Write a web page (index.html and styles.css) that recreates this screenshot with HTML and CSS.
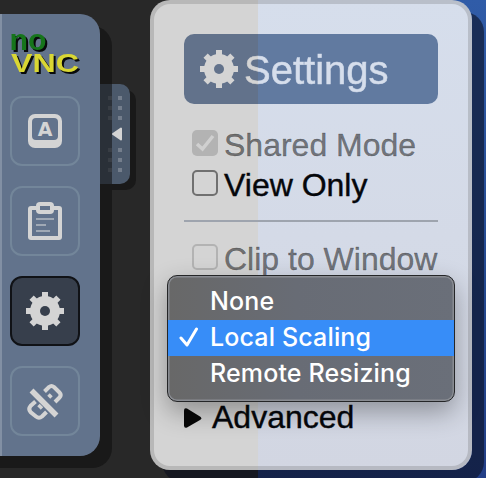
FILE: index.html
```html
<!DOCTYPE html>
<html lang="en">
<head>
<meta charset="utf-8">
<title>noVNC</title>
<link rel="stylesheet" href="styles.css">
</head>
<body>
<main class="screen">
  <nav class="bar">
    <svg class="logo" width="72" height="44" viewBox="0 0 72 44">
      <text class="no" x="-.5" y="17.500" textLength="37" lengthAdjust="spacingAndGlyphs">no</text>
      <text class="vnc" x="1" y="39.500" textLength="68" lengthAdjust="spacingAndGlyphs">VNC</text>
    </svg>
    <button class="tool"><svg width="50" height="50" viewBox="0 0 50 50">
      <rect class="fill" x="8" y="8" width="34" height="34" rx="7"/><rect class="hole" x="12" y="12" width="26" height="22" rx="4"/>
      <text class="key" x="25" y="30" text-anchor="middle">A</text></svg></button>
    <button class="tool"><svg width="50" height="50" viewBox="0 0 50 50">
      <rect class="fill" x="8" y="10" width="34" height="34" rx="3"/><rect class="hole" x="12" y="14" width="26" height="26"/>
      <rect class="fill" x="16" y="6" width="18" height="12" rx="4"/><rect class="hole" x="20" y="10" width="10" height="4"/>
      <path class="lines" d="M16 23h18M16 29h10M16 35h14"/></svg></button>
    <button class="tool active"><svg width="50" height="50" viewBox="0 0 50 50">
      <path class="teeth" d="M25 6v38M6 25h38M11.600 11.600l26.800 26.800M38.400 11.600l-26.800 26.800"/><circle class="fill" cx="25" cy="25" r="15"/><circle class="gear-hole" cx="25" cy="25" r="5"/></svg></button>
    <button class="tool"><svg width="50" height="50" viewBox="0 0 50 50">
      <path class="link" d="M24.500 15.500L29 11q2.500-2 5 0L39.500 16.500q2.500 2.500 0 5L35 26M15.500 25.500L10.500 30q-2.500 3 0 6L16 40.500q3 2.500 6 0L26.500 36"/>
      <path class="link cut" d="M11.500 14.500l25 25"/><path class="link dot" d="M28.500 18.500l3 3M18.500 29l3.500 3.500"/></svg></button>
  </nav>
  <div class="handle">
    <svg width="30" height="100" viewBox="0 0 30 100">
      <path class="dots" d="M8 14h4M18 14h4M8 24h4M18 24h4M8 34h4M18 34h4M8 66h4M18 66h4M8 76h4M18 76h4M8 86h4M18 86h4"/>
      <path class="hshade" d="M0 0h12v100H0z"/>
      <path class="arrow" d="M13 50 L21 44.500V55.500Z"/>
    </svg>
  </div>
  <section class="panel">
    <h1 class="title"><svg width="40" height="40" viewBox="5 5 40 40">
      <path class="teeth" d="M25 6v38M6 25h38M11.600 11.600l26.800 26.800M38.400 11.600l-26.800 26.800"/><circle class="fill" cx="25" cy="25" r="15"/><circle class="title-hole" cx="25" cy="25" r="5"/></svg><span>Settings</span></h1>
    <div class="row off"><i class="check"><svg width="26" height="26" viewBox="0 0 26 26"><path d="M5 14l5.500 5L21 6"/></svg></i><span>Shared Mode</span></div>
    <div class="row"><i class="check"></i><span>View Only</span></div>
    <hr>
    <div class="row off"><i class="check blank"></i><span>Clip to Window</span></div>
    <div class="row advanced"><svg width="20" height="24" viewBox="0 0 20 24"><path d="M2 4.500V19.500Q2 22.500 5 21.500L18 14Q20.500 12.200 18 10.500L5 2.500Q2 1.500 2 4.500Z"/></svg><span>Advanced</span></div>
  </section>
  <div class="menu">
    <div class="item"><span>None</span></div>
    <div class="item chosen"><svg width="20" height="22" viewBox="0 0 20 22"><path d="M2 12l6 7L17.500 3"/></svg><span>Local Scaling</span></div>
    <div class="item"><span>Remote Resizing</span></div>
  </div>
</main>
</body>
</html>
```
FILE: styles.css
```css
* { box-sizing: border-box; }
body { margin: 0; }
.screen {
  position: relative;
  display: flex;
  width: 486px;
  height: 478px;
  overflow: hidden;
  font-family: "Liberation Sans", Arial, sans-serif;
  background: linear-gradient(#282828, #282828) 0 0 / 258px 100% no-repeat,
    linear-gradient(#305ca8, #23488f 60%, #233f87);
}
.bar {
  width: 100px;
  height: 442px;
  margin-top: 14px;
  padding: 18px 0 0 10px;
  display: flex;
  flex-direction: column;
  flex: none;
  gap: 20px;
  border-radius: 0 20px 20px 0;
  background: linear-gradient(90deg, #8290a4 2px, #62738c 2px);
  box-shadow: 12px 12px 0 #191919, 0 12px 0 #191919;
}
.logo { display: block; flex: none; overflow: visible; filter: drop-shadow(2px 2px 0 #080a0b); }
.logo text { font-family: "Liberation Sans", sans-serif; font-weight: bold; }
.no { font-size: 29px; fill: #16751b; }
.vnc { font-size: 26px; fill: #d9d733; }
.tool {
  width: 70px;
  height: 70px;
  flex: none;
  display: grid;
  place-items: center;
  padding: 0;
  border: 2px solid #73869a;
  border-radius: 12px;
  background: transparent;
}
.tool svg { display: block; }
.tool.active { background: #373f4c; border-color: #101216; }
.fill { fill: #d4d4d4; }
.hole { fill: #62738c; }
.gear-hole { fill: #373f4c; }
.key { font: bold 19px "DejaVu Sans", sans-serif; fill: #d4d4d4; }
.lines { stroke: #a0a9b5; stroke-width: 2; }
.teeth { stroke: #d4d4d4; stroke-width: 6; }
.link { fill: none; stroke: #d4d4d4; stroke-width: 4; }
.cut { stroke-width: 5.500px; }
.dot { stroke-width: 3.500px; }
.handle {
  position: absolute;
  left: 100px;
  top: 84px;
  width: 30px;
  height: 100px;
  border-radius: 0 10px 10px 0;
  background: #4b596b;
  box-shadow: 6px 6px 0 #191919;
}
.handle svg { display: block; }
.dots { stroke: #747e8c; stroke-width: 4; }
.hshade { fill: rgba(26, 28, 30, .66); }
.arrow { fill: #d4d4d4; stroke: #d4d4d4; stroke-width: 2; stroke-linejoin: round; }
.panel {
  width: 322px;
  height: 470px;
  margin-left: 50px;
  flex: none;
  padding: 30px;
  border: 4px solid rgba(100, 100, 100, .25);
  border-radius: 20px;
  background: linear-gradient(90deg, #d4d4d4 108px, transparent 108px) border-box,
    linear-gradient(#d6deec, #d2d6e2) border-box;
  box-shadow: 12px 12px 0 rgba(10, 13, 30, .58);
  -webkit-text-stroke-width: .4px;
}
.title {
  height: 70px;
  margin: 0 0 21px;
  padding-left: 15px;
  display: flex;
  align-items: center;
  border-radius: 10px;
  font-size: 40px;
  font-weight: normal;
  background: linear-gradient(90deg, #62728b 74px, #617aa0 74px);
}
.title span {
  margin-left: 5px;
  line-height: 46px;
  padding-top: 1px;
  color: transparent;
  -webkit-text-stroke-width: .6px;
  background: linear-gradient(90deg, #d4d4d4 14px, #d6deec 14px);
  background-clip: text;
}
.title-hole { fill: #62728b; }
.row {
  height: 40px;
  display: flex;
  align-items: center;
  padding-left: 8px;
  font-size: 32px;
  line-height: 40px;
  color: #05070b;
  white-space: nowrap;
}
.row.off { color: rgba(0, 0, 0, .47); }
.check {
  position: relative;
  top: -2px;
  width: 26px;
  height: 26px;
  margin-right: 6px;
  border: 2px solid #707070;
  border-radius: 5px;
  flex: none;
}
.off .check { border: 0; background: #b3b3b3; }
.off .check.blank { border: 2px solid #b3b3b3; background: transparent; }
.check svg { display: block; fill: none; stroke: #d0d0d0; stroke-width: 3.500px; }
hr { height: 2px; margin: 15px 0 17px; border: 0; background: #9ea4ae; }
.advanced { margin-top: 118px; padding-left: 0; }
.advanced svg { margin: 2px 10px 0 -2px; fill: #080808; }
.menu {
  position: absolute;
  left: 167px;
  top: 275px;
  width: 288px;
  height: 127px;
  padding-top: 8px;
  border: 1px solid #252628;
  border-radius: 10px;
  background: linear-gradient(90deg, #686868, #686c75 45%, #6a6f79);
  box-shadow: inset 0 0 0 1.500px #898c92, 0 10px 26px rgba(0, 0, 0, .32);
}
.item {
  position: relative;
  height: 36px;
  padding-left: 42px;
  font: 500 25px/34px Inter, sans-serif;
  letter-spacing: .15px;
  color: #fff;
  white-space: nowrap;
}
.chosen { background: #378df8; }
.chosen svg { position: absolute; left: 11px; top: 6px; fill: none; stroke: #fff; stroke-width: 3; stroke-linecap: round; stroke-linejoin: round; }
```
